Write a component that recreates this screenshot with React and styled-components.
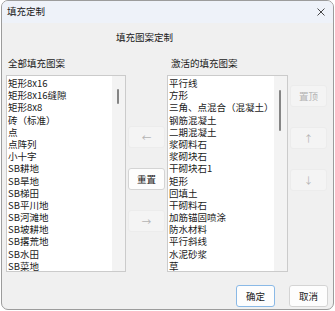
import React from 'react';
import styled, { createGlobalStyle } from 'styled-components';

const GlobalStyle = createGlobalStyle`
  html, body {
    margin: 0;
    padding: 0;
    background: #ffffff;
  }
  body {
    font-family: "Noto Sans CJK SC", "Noto Sans", sans-serif;
    font-size: 9.5px;
    color: #1a1a1a;
  }
`;

const Window = styled.div`
  box-sizing: border-box;
  width: 333px;
  height: 310px;
  margin-left: 1px;
  border: 1px solid #9c9c9c;
  border-radius: 7px;
  background: #f0f0f0;
  overflow: hidden;
  display: flex;
  flex-direction: column;
`;

const TitleBar = styled.div`
  height: 22px;
  flex-shrink: 0;
  background: #eef2f9;
  display: flex;
  align-items: center;
  justify-content: space-between;
  padding: 0 7px 0 5px;
`;

const Title = styled.span`
  font-size: 9.5px;
  line-height: 1;
`;

const Close = styled.svg`
  width: 8px;
  height: 8px;
  margin-right: 1px;
`;

const Body = styled.div`
  flex: 1;
  display: flex;
  flex-direction: column;
  padding: 0 0 0 4px;
`;

const Heading = styled.div`
  height: 28px;
  line-height: 28px;
  padding-left: 110px;
`;

const Labels = styled.div`
  display: flex;
  height: 24px;
  align-items: center;
`;

const Label = styled.div`
  width: ${p => p.$w}px;
  padding-left: 2px;
`;

const Main = styled.div`
  display: flex;
  align-items: flex-start;
  gap: 2px;
`;

const ListBox = styled.div`
  position: relative;
  box-sizing: border-box;
  width: ${p => p.$w}px;
  height: 197px;
  border: 1px solid #cbcbcb;
  background: #ffffff;
  overflow: hidden;
`;

const Items = styled.ul`
  list-style: none;
  margin: 0;
  padding: 1px 0 0 1px;
`;

const Item = styled.li`
  height: 12.2px;
  line-height: 12.2px;
  white-space: nowrap;
`;

const Track = styled.div`
  position: absolute;
  top: 0;
  right: 0;
  bottom: 0;
  width: 13px;
  background: #f3f3f3;
`;

const Thumb = styled.div`
  position: absolute;
  left: 5px;
  width: 2px;
  border-radius: 1px;
  background: #858585;
`;

const ButtonColumn = styled.div`
  display: flex;
  flex-direction: column;
  gap: 20px;
  padding-top: ${p => p.$top}px;
`;

const Button = styled.button`
  box-sizing: border-box;
  width: ${p => p.$w || 37}px;
  height: 22px;
  padding: 0;
  font-family: inherit;
  font-size: 9.5px;
  border-radius: 3px;
  border: 1px solid ${p => (p.$primary ? '#8ab9e6' : p.disabled ? '#ececec' : '#d4d4d4')};
  background: ${p => (p.disabled ? '#f4f4f4' : '#fdfdfd')};
  color: ${p => (p.disabled ? '#b3b3b3' : '#1a1a1a')};
`;

const Footer = styled.div`
  display: flex;
  justify-content: flex-end;
  gap: 14px;
  padding: 13px 5px 0 0;
`;

const allPatterns = [
  '矩形8x16', '矩形8x16缝隙', '矩形8x8', '砖（标准）', '点', '点阵列', '小十字',
  'SB耕地', 'SB旱地', 'SB梯田', 'SB平川地', 'SB河滩地', 'SB坡耕地', 'SB撂荒地',
  'SB水田', 'SB菜地',
];

const activePatterns = [
  '平行线', '方形', '三角、点混合（混凝土）', '钢筋混凝土', '二期混凝土', '浆砌料石',
  '浆砌块石', '干砌块石1', '矩形', '回填土', '干砌料石', '加筋锚固喷涂', '防水材料',
  '平行斜线', '水泥砂浆', '草',
];

const PatternList = ({ items, width, thumbTop, thumbHeight }) => (
  <ListBox $w={width}>
    <Items>
      {items.map(name => <Item key={name}>{name}</Item>)}
    </Items>
    <Track>
      <Thumb style={{ top: thumbTop, height: thumbHeight }} />
    </Track>
  </ListBox>
);

const App = () => {
  return (
    <>
      <GlobalStyle />
      <Window>
        <TitleBar>
          <Title>填充定制</Title>
          <Close viewBox="0 0 8 8">
            <path d="M0.5 0.5 L7.5 7.5 M7.5 0.5 L0.5 7.5" stroke="#333" strokeWidth="0.9" fill="none" />
          </Close>
        </TitleBar>
        <Body>
          <Heading>填充图案定制</Heading>
          <Labels>
            <Label $w={161}>全部填充图案</Label>
            <Label $w={160}>激活的填充图案</Label>
          </Labels>
          <Main>
            <PatternList items={allPatterns} width={120} thumbTop={13} thumbHeight={15} />
            <ButtonColumn $top={51}>
              <Button disabled>←</Button>
              <Button>重置</Button>
              <Button disabled>→</Button>
            </ButtonColumn>
            <PatternList items={activePatterns} width={121} thumbTop={14} thumbHeight={41} />
            <ButtonColumn $top={10}>
              <Button disabled>置顶</Button>
              <Button disabled>↑</Button>
              <Button disabled>↓</Button>
            </ButtonColumn>
          </Main>
          <Footer>
            <Button $primary $w={39}>确定</Button>
            <Button $w={39}>取消</Button>
          </Footer>
        </Body>
      </Window>
    </>
  );
};

export default App;
